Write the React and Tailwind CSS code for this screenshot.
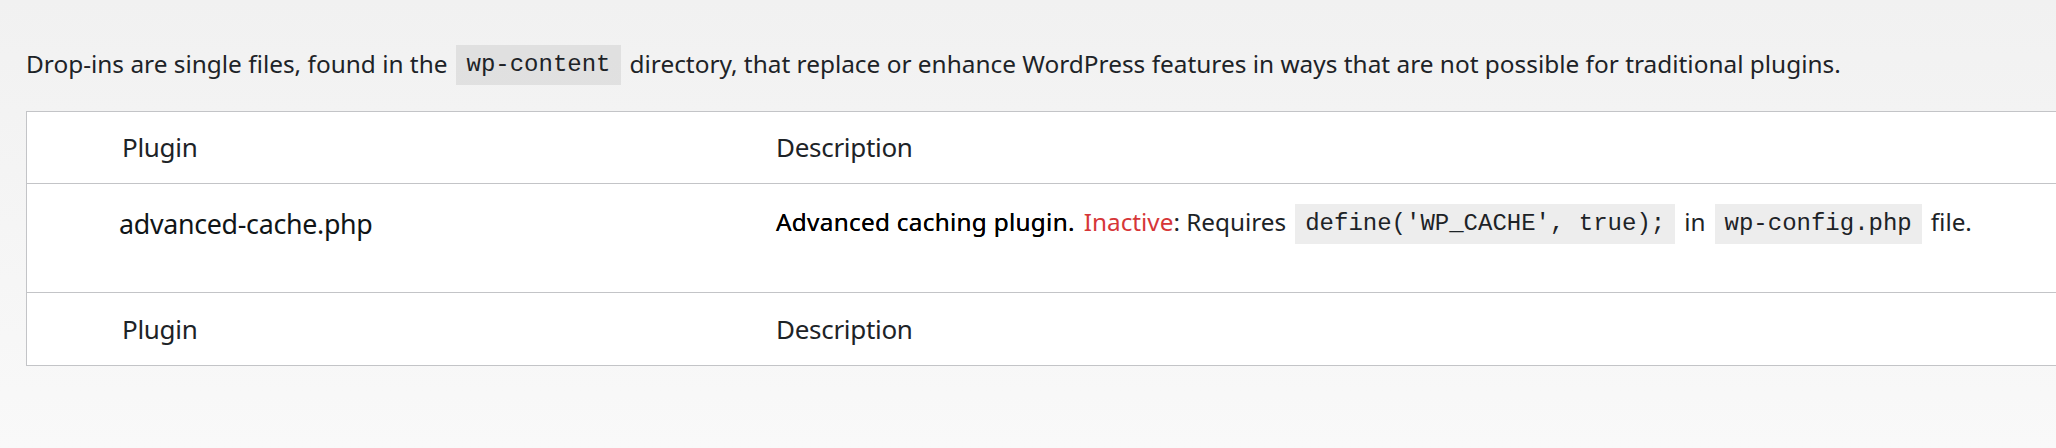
import React from "react";

const sans = { fontFamily: '"Noto Sans", "Open Sans", sans-serif' };

const Code = ({ children }) => (
  <code className="inline-block bg-black/[0.07] px-[10px] py-[4px] font-['Liberation_Mono',monospace] text-[24px] leading-[32px] text-[#1d2327] align-middle">
    {children}
  </code>
);

const HeadRow = ({ top }) => (
  <div className={`flex h-[72px] items-center text-[26px] tracking-[-0.3px] text-[#1d2327] ${top ? "border-b border-[#c3c4c7]" : ""}`}>
    <div className="w-[749px] shrink-0 pl-[95px]">Plugin</div>
    <div className="flex-1">Description</div>
  </div>
);

export default function App() {
  return (
    <div
      className="h-[448px] w-[2056px] overflow-hidden bg-gradient-to-b from-[#f1f1f1] to-[#f9f9f9] font-['Noto_Sans',sans-serif]"
      style={sans}
    >
      <p className="box-content flex h-[43px] items-center gap-[9px] pl-[26px] pt-[43px] text-[24.4px] text-[#1d2327]">
        <span>Drop-ins are single files, found in the</span>
        <Code>wp-content</Code>
        <span>directory, that replace or enhance WordPress features in ways that are not possible for traditional plugins.</span>
      </p>

      <div className="ml-[26px] mt-[25px] w-[2100px] border border-[#c3c4c7] bg-white">
        <HeadRow top />
        <div className="flex h-[109px] border-b border-[#c3c4c7] pt-[20px] text-[24.3px] text-[#1d2327]">
          <div className="w-[749px] shrink-0 pl-[92px] text-[26.8px] tracking-[-0.3px] text-[#101517]">advanced-cache.php</div>
          <div className="flex flex-1 items-start gap-[9px]">
            <span className="tracking-[0.3px] text-black [text-shadow:0_0_0.4px_#000]">Advanced caching plugin.</span>
            <span>
              <span className="text-[#d63638]">Inactive</span>: Requires
            </span>
            <Code>define('WP_CACHE', true);</Code>
            <span>in</span>
            <Code>wp-config.php</Code>
            <span>file.</span>
          </div>
        </div>
        <HeadRow />
      </div>
    </div>
  );
}
